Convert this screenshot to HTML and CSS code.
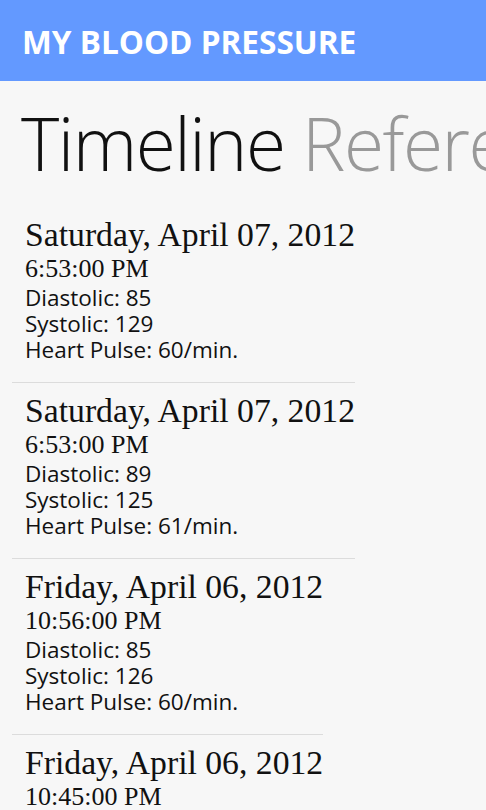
FILE: index.html
```html
<!DOCTYPE html>
<html lang="en">

<head>
    <meta charset="UTF-8">
    <meta name="viewport" content="width=device-width, initial-scale=1.0">
    <title>My Blood Pressure</title>
    <link rel="stylesheet" href="styles.css">
</head>

<body>
    <section id='header'>
        <h1>MY BLOOD PRESSURE</h1>
    </section>
    <section id='pivot'>
        <h2><span class='active'>Timeline</span> <span class='inactive'>Reference</span></h2>
    </section>
    <ul id='timeline'>
        <li class='entry'>
            <p class='date'>Saturday, April 07, 2012</p>
            <p class='time'>6:53:00 PM</p>
            <p class='value'>Diastolic: 85</p>
            <p class='value'>Systolic: 129</p>
            <p class='value'>Heart Pulse: 60/min.</p>
        </li>
        <li class='entry'>
            <p class='date'>Saturday, April 07, 2012</p>
            <p class='time'>6:53:00 PM</p>
            <p class='value'>Diastolic: 89</p>
            <p class='value'>Systolic: 125</p>
            <p class='value'>Heart Pulse: 61/min.</p>
        </li>
        <li class='entry'>
            <p class='date'>Friday, April 06, 2012</p>
            <p class='time'>10:56:00 PM</p>
            <p class='value'>Diastolic: 85</p>
            <p class='value'>Systolic: 126</p>
            <p class='value'>Heart Pulse: 60/min.</p>
        </li>
        <li class='entry'>
            <p class='date'>Friday, April 06, 2012</p>
            <p class='time'>10:45:00 PM</p>
            <p class='value'>Diastolic: 84</p>
            <p class='value'>Systolic: 124</p>
            <p class='value'>Heart Pulse: 60/min.</p>
        </li>
    </ul>
</body>

</html>
```

FILE: styles.css
```css
* {
    margin: 0;
    padding: 0;
    box-sizing: border-box;
}

html,
body {
    height: 100%;
    overflow: hidden;
}

body {
    background: #f7f7f7;
    color: #111;
    font-family: "Open Sans", "Noto Sans", sans-serif;
}

#header {
    height: 81px;
    background-color: #6399ff;
    display: flex;
    align-items: center;
    padding-left: 22px;
}

#header h1 {
    color: #fff;
    font-size: 31.6px;
    font-weight: 700;
    line-height: 1;
    padding-top: 2px;
}

#pivot {
    padding: 22px 0 0 21px;
    white-space: nowrap;
    overflow: hidden;
}

#pivot h2 {
    font-size: 73px;
    font-weight: 300;
    line-height: 80px;
    letter-spacing: -1.5px;
}

#pivot .active {
    color: #111;
}

#pivot .inactive {
    color: #999;
}

#timeline {
    list-style: none;
    display: flex;
    flex-direction: column;
    align-items: flex-start;
    padding-top: 34px;
}

.entry {
    margin-left: 12px;
    padding: 0 0 19px 13px;
    margin-bottom: 10px;
    border-bottom: 1px solid #dcdcdc;
}

.date {
    font-family: "Liberation Serif", serif;
    font-size: 33.7px;
    line-height: 36px;
}

.time {
    font-family: "Liberation Serif", serif;
    font-size: 26px;
    line-height: 32px;
}

.value {
    font-size: 22.5px;
    line-height: 26px;
}
```
